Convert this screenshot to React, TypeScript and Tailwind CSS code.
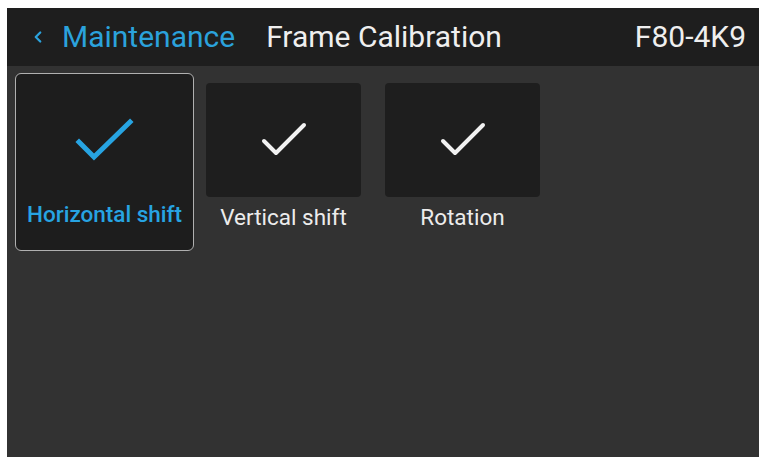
import { ChevronLeft } from 'lucide-react'

type Tile = {
  label: string
  selected?: boolean
}

const tiles: Tile[] = [
  { label: 'Horizontal shift', selected: true },
  { label: 'Vertical shift' },
  { label: 'Rotation' },
]

function Check({ selected }: { selected?: boolean }) {
  if (selected) {
    return (
      <svg width="60" height="46" viewBox="0 0 60 46" fill="none">
        <path d="M4 25 L19 40 L55 5" stroke="#27a4e2" strokeWidth="5" strokeLinecap="square" />
      </svg>
    )
  }
  return (
    <svg width="46" height="36" viewBox="0 0 46 36" fill="none">
      <path d="M3 19 L15 31 L43 3" stroke="#f2f2f2" strokeWidth="4" strokeLinecap="round" strokeLinejoin="round" />
    </svg>
  )
}

export default function App() {
  return (
    <div className="h-[457px] w-[759px] overflow-hidden bg-white pl-[7px] pt-[8px] font-['Roboto',sans-serif]">
      <div className="flex h-full flex-col bg-[#323232]">
        <div className="flex h-[58px] items-center bg-[#1e1e1e] pl-[22px] pr-[13px]">
          <ChevronLeft className="h-[18px] w-[18px] text-[#2ba2dc]" strokeWidth={3} />
          <span className="ml-[15px] text-[30px] leading-none text-[#2ba2dc]">Maintenance</span>
          <span className="ml-[31px] text-[30px] leading-none text-[#efefef]">Frame Calibration</span>
          <span className="ml-auto text-[30px] leading-none text-[#efefef]">F80-4K9</span>
        </div>
        <div className="flex pl-[8px] pt-[7px]">
          {tiles.map(t => (
            <div
              key={t.label}
              className={
                t.selected
                  ? 'flex h-[178px] w-[179px] flex-col items-center rounded-[6px] border-[1.5px] border-[#b0b0b0] bg-[#1d1d1d]'
                  : 'flex h-[178px] w-[179px] flex-col items-center'
              }
            >
              <div
                className={
                  t.selected
                    ? 'mt-[9px] flex h-[114px] w-[155px] items-center justify-center'
                    : 'mt-[10px] flex h-[114px] w-[155px] items-center justify-center rounded-[4px] bg-[#1e1e1e]'
                }
              >
                <Check selected={t.selected} />
              </div>
              <div
                className={
                  t.selected
                    ? 'mt-[1px] whitespace-nowrap text-[22.5px] font-medium text-[#27a4e2]'
                    : 'mt-[4px] whitespace-nowrap text-[22.5px] text-[#ececec]'
                }
              >
                {t.label}
              </div>
            </div>
          ))}
        </div>
      </div>
    </div>
  )
}
